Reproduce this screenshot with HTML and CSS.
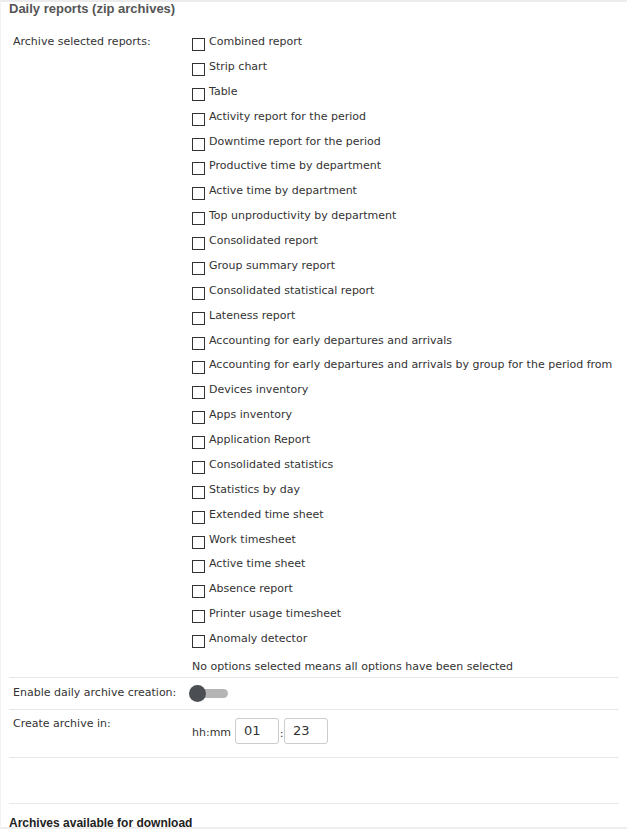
FILE: index.html
```html
<!DOCTYPE html>
<html lang="en">

<head>
    <meta charset="UTF-8">
    <meta name="viewport" content="width=device-width, initial-scale=1.0">
    <title>Daily reports</title>
    <link rel="stylesheet" href="styles.css">
</head>

<body>
    <div class="panel">
        <h3 class="panel-title">Daily reports (zip archives)</h3>

        <div class="form-row row-reports">
            <div class="form-label">Archive selected reports:</div>
            <div class="form-field">
                <ul class="check-list">
                    <li><label><input type="checkbox"><span>Combined report</span></label></li>
                    <li><label><input type="checkbox"><span>Strip chart</span></label></li>
                    <li><label><input type="checkbox"><span>Table</span></label></li>
                    <li><label><input type="checkbox"><span>Activity report for the period</span></label></li>
                    <li><label><input type="checkbox"><span>Downtime report for the period</span></label></li>
                    <li><label><input type="checkbox"><span>Productive time by department</span></label></li>
                    <li><label><input type="checkbox"><span>Active time by department</span></label></li>
                    <li><label><input type="checkbox"><span>Top unproductivity by department</span></label></li>
                    <li><label><input type="checkbox"><span>Consolidated report</span></label></li>
                    <li><label><input type="checkbox"><span>Group summary report</span></label></li>
                    <li><label><input type="checkbox"><span>Consolidated statistical report</span></label></li>
                    <li><label><input type="checkbox"><span>Lateness report</span></label></li>
                    <li><label><input type="checkbox"><span>Accounting for early departures and arrivals</span></label></li>
                    <li><label><input type="checkbox"><span>Accounting for early departures and arrivals by group for the period from</span></label></li>
                    <li><label><input type="checkbox"><span>Devices inventory</span></label></li>
                    <li><label><input type="checkbox"><span>Apps inventory</span></label></li>
                    <li><label><input type="checkbox"><span>Application Report</span></label></li>
                    <li><label><input type="checkbox"><span>Consolidated statistics</span></label></li>
                    <li><label><input type="checkbox"><span>Statistics by day</span></label></li>
                    <li><label><input type="checkbox"><span>Extended time sheet</span></label></li>
                    <li><label><input type="checkbox"><span>Work timesheet</span></label></li>
                    <li><label><input type="checkbox"><span>Active time sheet</span></label></li>
                    <li><label><input type="checkbox"><span>Absence report</span></label></li>
                    <li><label><input type="checkbox"><span>Printer usage timesheet</span></label></li>
                    <li><label><input type="checkbox"><span>Anomaly detector</span></label></li>
                </ul>
                <div class="hint">No options selected means all options have been selected</div>
            </div>
        </div>

        <div class="form-row row-switch">
            <div class="form-label">Enable daily archive creation:</div>
            <div class="form-field">
                <div class="switch">
                    <div class="switch-track"></div>
                    <div class="switch-knob"></div>
                </div>
            </div>
        </div>

        <div class="form-row row-time">
            <div class="form-label">Create archive in:</div>
            <div class="form-field time-field">
                <span class="time-hint">hh:mm</span>
                <input class="time-input" type="text" value="01">
                <span class="time-sep">:</span>
                <input class="time-input" type="text" value="23">
            </div>
        </div>

        <div class="spacer"></div>

        <h4 class="section-title">Archives available for download</h4>
    </div>
</body>

</html>
```

FILE: styles.css
```css
body {
    margin: 0;
    background-color: #fff;
    color: #333;
    font-family: "DejaVu Sans", Verdana, sans-serif;
    font-size: 11px;
}

.panel {
    border-top: 2px solid #ececec;
    border-left: 1px solid #f2f2f2;
    padding: 0 8px 0 8px;
    height: 825px;
    overflow: hidden;
    border-bottom: 2px solid #eeeeee;
}

.panel-title {
    margin: 0;
    font-family: "Liberation Sans", Arial, sans-serif;
    font-size: 13px;
    font-weight: bold;
    color: #555;
    line-height: 13px;
}

.form-row {
    display: flex;
    border-bottom: 1px solid #e8e8e8;
}

.form-label {
    width: 179px;
    padding-left: 4px;
    flex-shrink: 0;
    line-height: 14px;
}

.form-field {
    flex: 1;
}

.row-reports {
    padding-top: 20px;
}

.check-list {
    list-style: none;
    margin: 0;
    padding: 0;
}

.check-list li {
    height: 24.875px;
}

.check-list label {
    display: flex;
    align-items: flex-start;
    gap: 4px;
}

.check-list input {
    appearance: none;
    -webkit-appearance: none;
    width: 13px;
    height: 13px;
    margin: 3px 0 0 0;
    border: 1px solid #333;
    background-color: #fff;
    border-radius: 0;
    flex-shrink: 0;
}

.check-list span {
    line-height: 14px;
}

.hint {
    padding: 3px 0 4px 0;
    line-height: 13px;
}

.row-switch {
    height: 31px;
    align-items: center;
}

.switch {
    position: relative;
    width: 40px;
    height: 17px;
    margin-left: -3px;
}

.switch-track {
    position: absolute;
    left: 2px;
    top: 4px;
    width: 37px;
    height: 9px;
    border-radius: 5px;
    background-color: #b5b5b5;
}

.switch-knob {
    position: absolute;
    left: 0;
    top: 0;
    width: 17px;
    height: 17px;
    border-radius: 50%;
    background-color: #4b4e52;
}

.row-time {
    height: 47px;
}

.row-time .form-label {
    padding-top: 7px;
}

.time-field {
    display: flex;
    align-items: center;
    padding-top: 8px;
    height: 26px;
}

.time-hint {
    margin-right: 4px;
    padding-top: 4px;
}

.time-input {
    width: 44px;
    height: 26px;
    box-sizing: border-box;
    border: 1px solid #ccc;
    border-radius: 3px;
    padding: 0 0 0 8px;
    font-family: "DejaVu Sans", Verdana, sans-serif;
    font-size: 13px;
    color: #333;
    margin: 0;
}

.time-sep {
    width: 5px;
    text-align: center;
    padding-top: 6px;
}

.spacer {
    height: 45px;
    border-bottom: 1px solid #e8e8e8;
}

.section-title {
    margin: 13px 0 0 0;
    font-family: "Liberation Sans", Arial, sans-serif;
    font-size: 12px;
    font-weight: bold;
    color: #222;
    line-height: 12px;
}
```
